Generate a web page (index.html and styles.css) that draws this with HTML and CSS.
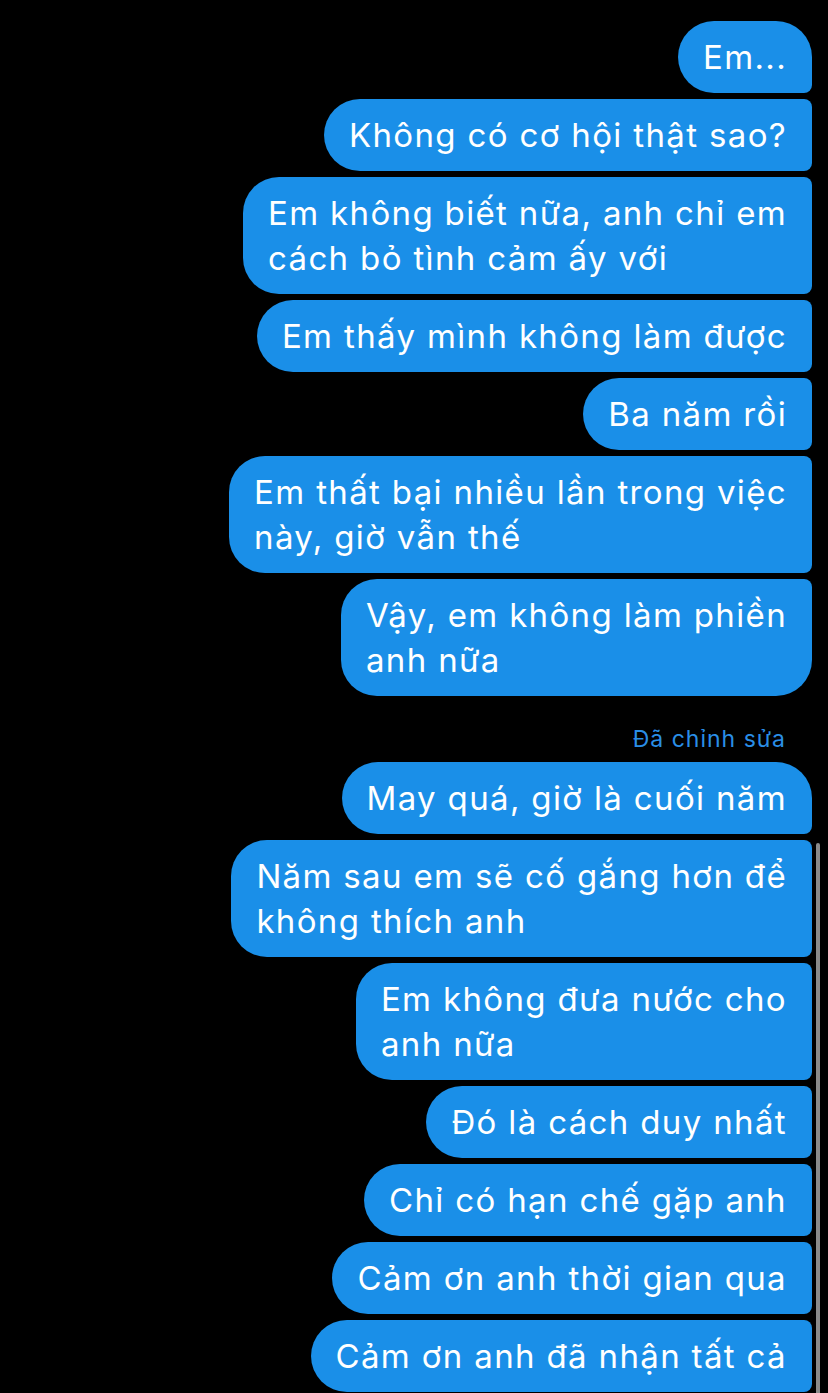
FILE: index.html
```html
<!DOCTYPE html>
<html>
<head>
  <meta charset="utf-8">
  <title>Chat</title>
  <link rel="stylesheet" href="styles.css">
</head>
<body>
  <div class="chat">
    <div class="msg first">Em...</div>
    <div class="msg">Không có cơ hội thật sao?</div>
    <div class="msg">Em không biết nữa, anh chỉ em<br>cách bỏ tình cảm ấy với</div>
    <div class="msg">Em thấy mình không làm được</div>
    <div class="msg">Ba năm rồi</div>
    <div class="msg">Em thất bại nhiều lần trong việc<br>này, giờ vẫn thế</div>
    <div class="msg last">Vậy, em không làm phiền<br>anh nữa</div>
    <div class="edited">Đã chỉnh sửa</div>
    <div class="msg first">May quá, giờ là cuối năm</div>
    <div class="msg">Năm sau em sẽ cố gắng hơn để<br>không thích anh</div>
    <div class="msg">Em không đưa nước cho<br>anh nữa</div>
    <div class="msg">Đó là cách duy nhất</div>
    <div class="msg">Chỉ có hạn chế gặp anh</div>
    <div class="msg">Cảm ơn anh thời gian qua</div>
    <div class="msg">Cảm ơn anh đã nhận tất cả</div>
  </div>
  <div class="scrollbar"></div>
</body>
</html>
```

FILE: styles.css
```css
body {
  margin: 0;
  padding: 0;
  background-color: #000000;
  font-family: Inter, "Noto Sans", sans-serif;
  height: 1393px;
  overflow: hidden;
  position: relative;
}

.chat {
  display: flex;
  flex-direction: column;
  align-items: flex-end;
  gap: 6px;
  padding: 21px 16px 0 0;
}

.msg {
  background-color: #1a8fe8;
  color: #ffffff;
  font-size: 33px;
  letter-spacing: 1.35px;
  line-height: 45px;
  padding: 13.5px 25px 13.5px 25px;
  border-radius: 36px 8px 8px 36px;
  white-space: nowrap;
}

.msg.first {
  border-top-right-radius: 36px;
}

.msg.last {
  border-bottom-right-radius: 36px;
}

.edited {
  color: #2a8ee6;
  font-size: 23px;
  letter-spacing: 1px;
  line-height: 28px;
  margin: 23px 26px 3px 0;
}

.scrollbar {
  position: absolute;
  right: 8px;
  top: 843px;
  width: 4px;
  height: 560px;
  border-radius: 2px;
  background-color: #8a8a8a;
}
```
